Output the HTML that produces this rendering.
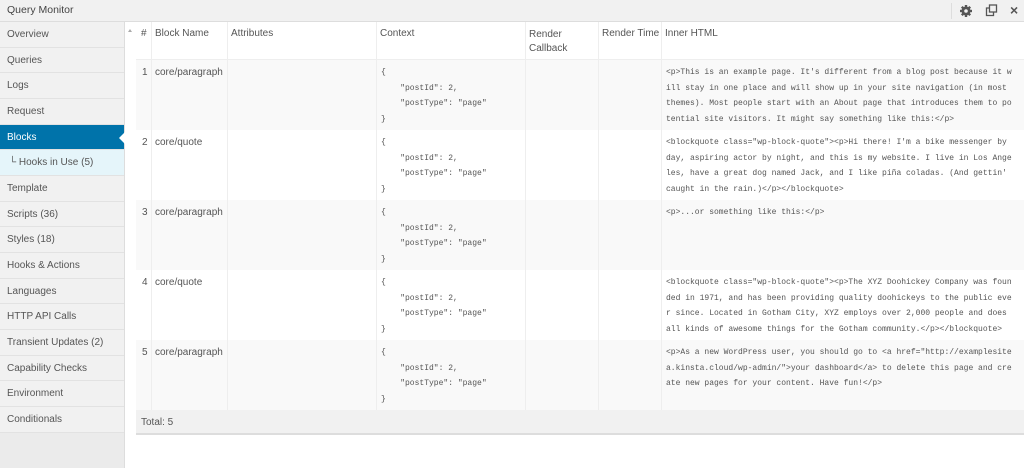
<!DOCTYPE html>
<html><head><meta charset="utf-8"><style>
*{box-sizing:border-box;margin:0;padding:0}
body{width:1024px;height:468px;overflow:hidden;background:#fff;font-family:"Liberation Sans",sans-serif;font-size:10px;color:#555;position:relative}
.top{position:absolute;left:0;top:0;width:1024px;height:22px;background:#f1f1f1;border-bottom:1px solid #ddd}
.top .t{position:absolute;left:7px;top:4px;font-size:10.5px;color:#444}
.side{position:absolute;left:0;top:22px;width:125px;height:446px;background:#ebebeb;border-right:1px solid #ddd}
.side div{height:25.67px;line-height:25px;padding-left:7px;background:#f1f1f1;border-bottom:1px solid #e2e2e2;color:#555;position:relative}
.side .act{background:#0073aa;color:#fff}
.side .act:after{content:"";position:absolute;right:-1px;top:7px;border:6px solid transparent;border-right-color:#fff}
.side .sub{background:#e5f5fa;padding-left:9px}
.gut{position:absolute;left:125px;top:22px;width:11px;height:446px;background:#fff}
.cell{position:absolute}
.vl{position:absolute;top:22px;height:388px;width:1px;background:#eee}
.row{position:absolute;left:136px;width:888px;height:70px}
.mono{font-family:"Liberation Mono",monospace;font-size:8px;color:#555;line-height:15.6px;white-space:pre}
</style></head><body>
<div class="top"><span class="t">Query Monitor</span>
<div style="position:absolute;left:951px;top:3px;width:1px;height:16px;background:#ddd"></div>
<svg style="position:absolute;left:959px;top:4px" width="14" height="14" viewBox="0 0 14 14"><circle cx="7" cy="7" r="4.5" fill="#555"/><g stroke="#555" stroke-width="2.4"><line x1="7" y1="1" x2="7" y2="13"/><line x1="1" y1="7" x2="13" y2="7"/><line x1="2.8" y1="2.8" x2="11.2" y2="11.2"/><line x1="11.2" y1="2.8" x2="2.8" y2="11.2"/></g><circle cx="7" cy="7" r="1.8" fill="#f1f1f1"/></svg>
<svg style="position:absolute;left:985px;top:4px" width="13" height="13" viewBox="0 0 13 13" fill="none" stroke="#555" stroke-width="1.3"><rect x="4.5" y="1" width="7" height="7"/><path d="M4.5 4H1.5V11.5H8.5V8"/></svg>
<div style="position:absolute;left:1010px;top:2px;font-size:14px;font-weight:bold;color:#555">×</div>
</div>
<div class="side">
<div>Overview</div><div>Queries</div><div>Logs</div><div>Request</div><div class="act">Blocks</div><div class="sub">└ Hooks in Use (5)</div><div>Template</div><div>Scripts (36)</div><div>Styles (18)</div><div>Hooks &amp; Actions</div><div>Languages</div><div>HTTP API Calls</div><div>Transient Updates (2)</div><div>Capability Checks</div><div>Environment</div><div>Conditionals</div>
</div>
<div class="gut"><div style="position:absolute;left:3px;top:5px;border:2.5px solid transparent;border-bottom:3px solid #aaa"></div></div>

<div class="row" style="top:60px;background:#f9f9f9"></div>
<div class="row" style="top:130px;background:#fff"></div>
<div class="row" style="top:200px;background:#f9f9f9"></div>
<div class="row" style="top:270px;background:#fff"></div>
<div class="row" style="top:340px;background:#f9f9f9"></div>
<div style="position:absolute;left:136px;top:59px;width:888px;height:1px;background:#eee"></div>
<div class="vl" style="left:151px"></div><div class="vl" style="left:227px"></div><div class="vl" style="left:376px"></div><div class="vl" style="left:525px"></div><div class="vl" style="left:598px"></div><div class="vl" style="left:661px"></div>

<div class="cell" style="left:141px;top:28px">#</div>
<div class="cell" style="left:155px;top:28px">Block Name</div>
<div class="cell" style="left:231px;top:28px">Attributes</div>
<div class="cell" style="left:380px;top:28px">Context</div>
<div class="cell" style="left:529px;top:28px;line-height:14px">Render<br>Callback</div>
<div class="cell" style="left:602px;top:28px">Render Time</div>
<div class="cell" style="left:665px;top:28px">Inner HTML</div>

<div class="cell" style="left:142px;top:67px">1</div><div class="cell" style="left:155px;top:67px">core/paragraph</div>
<div class="cell" style="left:142px;top:137px">2</div><div class="cell" style="left:155px;top:137px">core/quote</div>
<div class="cell" style="left:142px;top:207px">3</div><div class="cell" style="left:155px;top:207px">core/paragraph</div>
<div class="cell" style="left:142px;top:277px">4</div><div class="cell" style="left:155px;top:277px">core/quote</div>
<div class="cell" style="left:142px;top:347px">5</div><div class="cell" style="left:155px;top:347px">core/paragraph</div>

<div class="cell mono" style="left:381px;top:65px">{
    "postId": 2,
    "postType": "page"
}</div>
<div class="cell mono" style="left:381px;top:135px">{
    "postId": 2,
    "postType": "page"
}</div>
<div class="cell mono" style="left:381px;top:205px">{
    "postId": 2,
    "postType": "page"
}</div>
<div class="cell mono" style="left:381px;top:275px">{
    "postId": 2,
    "postType": "page"
}</div>
<div class="cell mono" style="left:381px;top:345px">{
    "postId": 2,
    "postType": "page"
}</div>

<div class="cell mono" style="left:666px;top:65px">&lt;p&gt;This is an example page. It's different from a blog post because it w
ill stay in one place and will show up in your site navigation (in most 
themes). Most people start with an About page that introduces them to po
tential site visitors. It might say something like this:&lt;/p&gt;</div>
<div class="cell mono" style="left:666px;top:135px">&lt;blockquote class="wp-block-quote"&gt;&lt;p&gt;Hi there! I'm a bike messenger by 
day, aspiring actor by night, and this is my website. I live in Los Ange
les, have a great dog named Jack, and I like piña coladas. (And gettin' 
caught in the rain.)&lt;/p&gt;&lt;/blockquote&gt;</div>
<div class="cell mono" style="left:666px;top:205px">&lt;p&gt;...or something like this:&lt;/p&gt;</div>
<div class="cell mono" style="left:666px;top:275px">&lt;blockquote class="wp-block-quote"&gt;&lt;p&gt;The XYZ Doohickey Company was foun
ded in 1971, and has been providing quality doohickeys to the public eve
r since. Located in Gotham City, XYZ employs over 2,000 people and does 
all kinds of awesome things for the Gotham community.&lt;/p&gt;&lt;/blockquote&gt;</div>
<div class="cell mono" style="left:666px;top:345px">&lt;p&gt;As a new WordPress user, you should go to &lt;a href="http://examplesite
a.kinsta.cloud/wp-admin/"&gt;your dashboard&lt;/a&gt; to delete this page and cre
ate new pages for your content. Have fun!&lt;/p&gt;</div>

<div style="position:absolute;left:136px;top:410px;width:888px;height:25px;background:#f1f1f1;border-bottom:2px solid #ddd"></div>
<div class="cell" style="left:141px;top:417px">Total: 5</div>
</body></html>
